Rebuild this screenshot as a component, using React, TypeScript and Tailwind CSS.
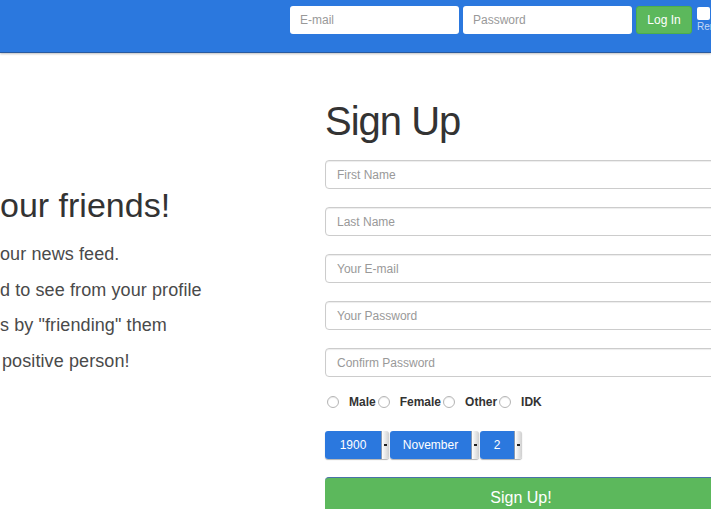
import React from 'react';

const Radio = ({ label }: { label: string }) => (
  <div className="flex items-center">
    <span className="w-[12px] h-[12px] rounded-full border border-[#b5b5b5] bg-white shadow-[inset_0_1px_1px_rgba(0,0,0,0.08)]" />
    <span className="ml-[10px] mr-[2px] text-[12px] font-bold text-[#333]">{label}</span>
  </div>
);

const Select = ({ value, width }: { value: string; width: string }) => (
  <div className="flex h-[28px] rounded-[3px] overflow-hidden shadow-[0_1px_1px_rgba(0,0,0,0.3)]">
    <div className={`${width} flex items-center justify-center bg-[#2b78de] text-white text-[12px]`}>{value}</div>
    <div className="w-[8px] flex items-center justify-center bg-gradient-to-r from-white to-[#cfcfcf] border-l border-[#8a9ab0]">
      <span className="w-[3px] h-[2px] bg-[#222]" />
    </div>
  </div>
);

const fields = ['First Name', 'Last Name', 'Your E-mail', 'Your Password', 'Confirm Password'];

export default function App() {
  return (
    <div className="w-[711px] h-[509px] overflow-hidden bg-white font-['Liberation_Sans',Arial,sans-serif]">
      <header className="h-[53px] bg-[#2b78de] border-b border-[#2a5a9e] shadow-[0_1px_2px_rgba(0,0,0,0.25)] flex items-start pt-[6px] pl-[290px] gap-[4px]">
        <input
          className="w-[169px] h-[28px] shrink-0 rounded-[3px] bg-white pl-[10px] text-[12px] outline-none placeholder:text-[#999]"
          placeholder="E-mail"
        />
        <input
          className="w-[169px] h-[28px] shrink-0 rounded-[3px] bg-white pl-[10px] text-[12px] outline-none placeholder:text-[#999]"
          placeholder="Password"
        />
        <button className="w-[56px] h-[28px] shrink-0 rounded-[3px] bg-[#5cb85c] border border-[#4cae4c] text-white text-[12px] whitespace-nowrap">
          Log In
        </button>
        <div className="flex flex-col items-start pl-[1px] pt-[1px] shrink-0">
          <span className="w-[13px] h-[13px] rounded-[2px] bg-white" />
          <span className="text-[10px] leading-[14px] text-[#c3d7f5] whitespace-nowrap">Remember me</span>
        </div>
      </header>

      <main className="flex">
        <div className="w-[325px] shrink-0 pt-[135px]">
          <h2 className="text-[34px] leading-none text-[#333] whitespace-nowrap">our friends!</h2>
          <div className="mt-[15px] text-[18px] leading-[35.7px] text-[#4a4a4a] tracking-[0.1px] whitespace-nowrap">
            <p>our news feed.</p>
            <p>d to see from your profile</p>
            <p>s by "friending" them</p>
            <p className="pl-[2px]"> positive person!</p>
          </div>
        </div>

        <div className="w-[392px] shrink-0 pt-[48px]">
          <h1 className="text-[40px] leading-none tracking-[-1px] text-[#333]">Sign Up</h1>
          <div className="mt-[19px] flex flex-col gap-[18px]">
            {fields.map((f) => (
              <input
                key={f}
                className="w-full h-[29px] rounded-[4px] border border-[#ccc] bg-white pl-[11px] text-[12px] outline-none placeholder:text-[#999] shadow-[inset_0_1px_1px_rgba(0,0,0,0.075)]"
                placeholder={f}
              />
            ))}
          </div>
          <div className="mt-[17px] flex items-center pl-[2px] h-[16px]">
            <Radio label="Male" />
            <Radio label="Female" />
            <Radio label="Other" />
            <Radio label="IDK" />
          </div>
          <div className="mt-[21px] flex gap-[1px]">
            <Select value="1900" width="w-[56px]" />
            <Select value="November" width="w-[81px]" />
            <Select value="2" width="w-[34px]" />
          </div>
          <button className="mt-[18px] w-full h-[40px] rounded-t-[4px] bg-[#5cb85c] border-t border-[#4a72a8] text-white text-[16px]">
            Sign Up!
          </button>
        </div>
      </main>
    </div>
  );
}
